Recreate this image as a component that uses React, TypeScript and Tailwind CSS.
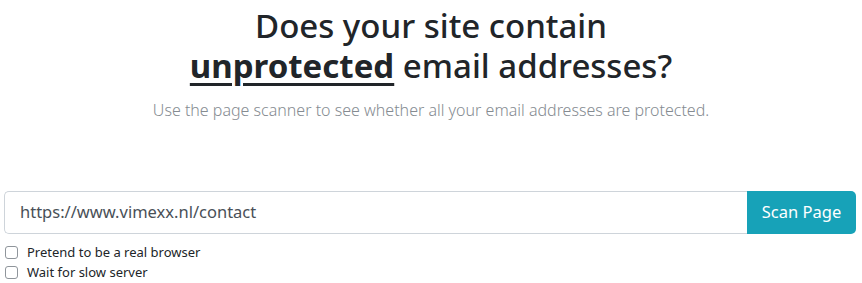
export default function App() {
  return (
    <div
      className="w-full bg-white text-[#212529]"
      style={{ fontFamily: '"Noto Sans", "Open Sans", sans-serif' }}
    >
      <div className="pt-[6px] text-center">
        <h1 className="text-[33px] font-medium leading-[40px]">
          Does your site contain
          <br />
          <span className="font-bold underline decoration-[3px] underline-offset-[5px]">unprotected</span>{' '}
          email addresses?
        </h1>
        <p className="mt-[12px] text-[16px] font-light text-[#858b91]">
          Use the page scanner to see whether all your email addresses are protected.
        </p>
      </div>

      <form className="mt-[69px] pl-[4px] pr-[6px]" onSubmit={e => e.preventDefault()}>
        <div className="flex h-[43px]">
          <input
            type="text"
            defaultValue="https://www.vimexx.nl/contact"
            className="min-w-0 flex-1 rounded-l-[5px] border border-r-0 border-[#ced4da] px-[15px] text-[16.5px] text-[#495057] outline-none"
          />
          <button
            type="submit"
            className="w-[109px] rounded-r-[5px] bg-[#17a2b8] text-[16.5px] text-white"
          >
            Scan Page
          </button>
        </div>
        <div className="mt-[11px] flex flex-col gap-[5px] pl-[1px] text-[13px]">
          <label className="flex items-center gap-[9px] leading-[15px]">
            <input
              type="checkbox"
              className="size-[13px] appearance-none rounded-[3px] border border-[#8f959b] bg-white"
            />
            Pretend to be a real browser
          </label>
          <label className="flex items-center gap-[9px] leading-[15px]">
            <input
              type="checkbox"
              className="size-[13px] appearance-none rounded-[3px] border border-[#8f959b] bg-white"
            />
            Wait for slow server
          </label>
        </div>
      </form>
    </div>
  )
}
